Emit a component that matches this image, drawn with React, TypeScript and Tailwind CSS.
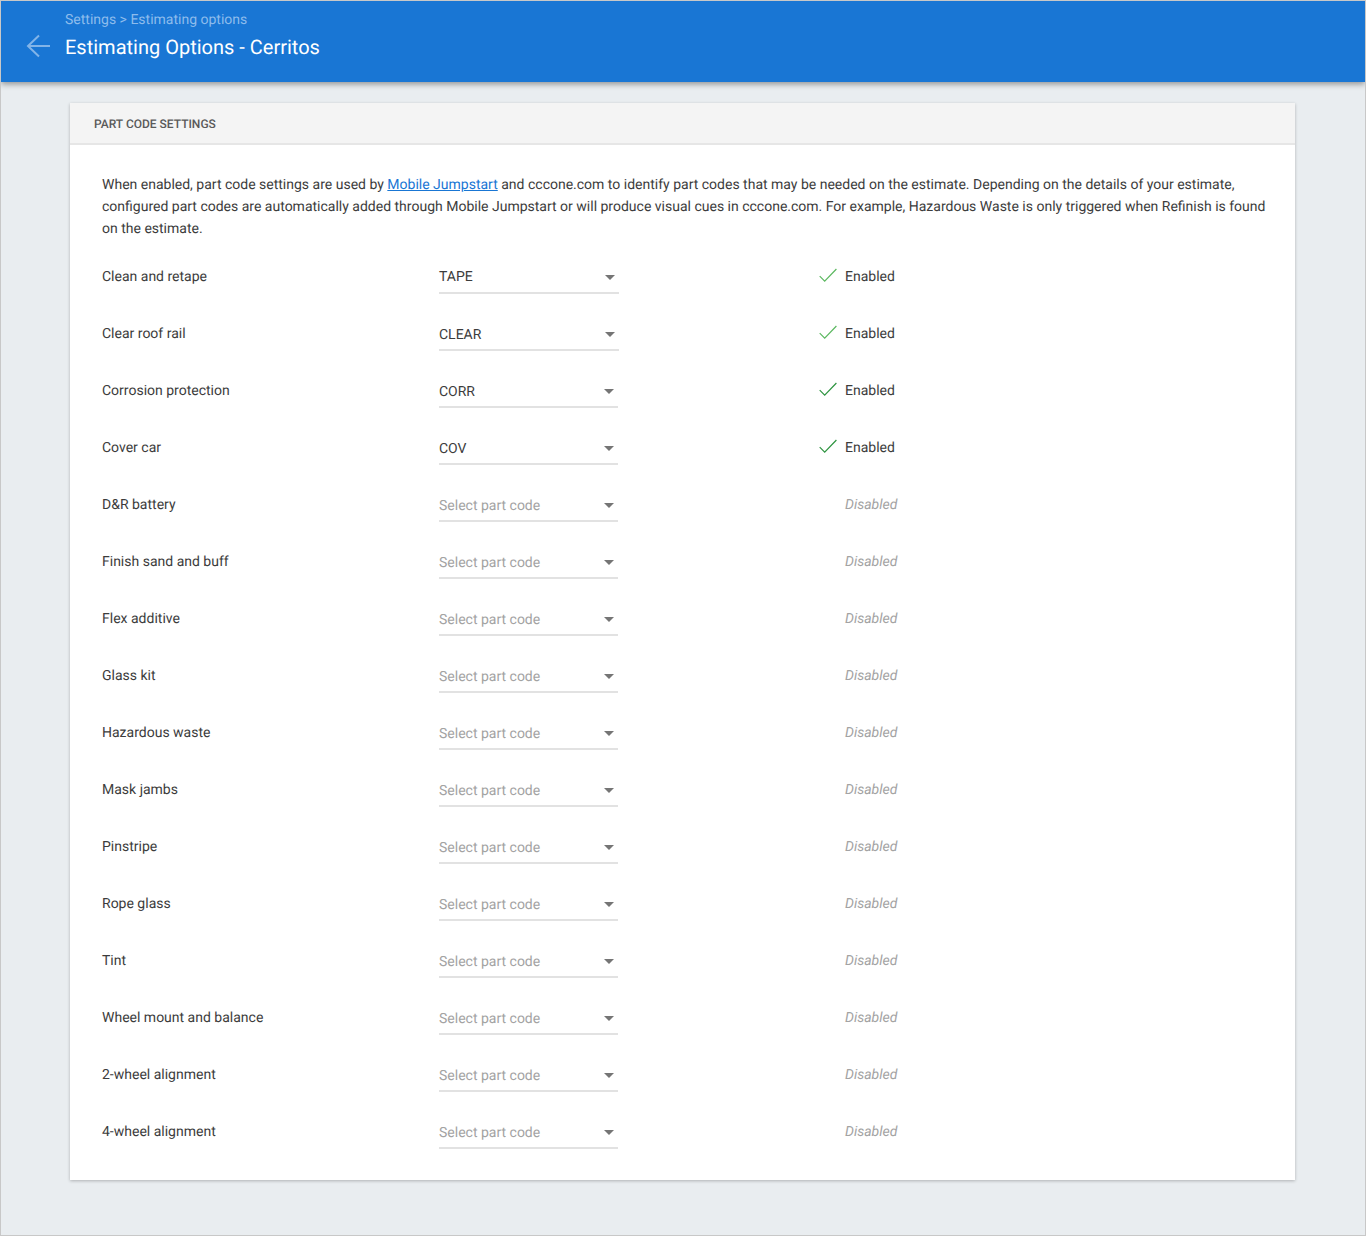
const rows: { label: string; code?: string; w: string; tone?: string; check?: string }[] = [
  { label: "Clean and retape", code: "TAPE", w: "w-[180px]", tone: "-mt-[2px]", check: "#5cb860" },
  { label: "Clear roof rail", code: "CLEAR", w: "w-[180px]", check: "#5cb860" },
  { label: "Corrosion protection", code: "CORR", w: "w-[179px]", check: "#2e9440" },
  { label: "Cover car", code: "COV", w: "w-[179px]", check: "#2e9440" },
  { label: "D&R battery", w: "w-[179px]" },
  { label: "Finish sand and buff", w: "w-[179px]" },
  { label: "Flex additive", w: "w-[179px]" },
  { label: "Glass kit", w: "w-[179px]" },
  { label: "Hazardous waste", w: "w-[179px]" },
  { label: "Mask jambs", w: "w-[179px]" },
  { label: "Pinstripe", w: "w-[179px]" },
  { label: "Rope glass", w: "w-[179px]" },
  { label: "Tint", w: "w-[179px]" },
  { label: "Wheel mount and balance", w: "w-[179px]" },
  { label: "2-wheel alignment", w: "w-[179px]" },
  { label: "4-wheel alignment", w: "w-[179px]" },
];

function Row({ r }: { r: (typeof rows)[number] }) {
  return (
    <div className="flex h-[57px] items-start">
      <div className="w-[337px] pt-[18px] text-[14px] leading-[22px] text-[#3c3c3c]">{r.label}</div>
      <div className="w-[380px]">
        <div className={`${r.w} mt-[17px] flex h-[29px] items-center justify-between border-b-2 border-[#e2e2e2] pb-[1px]`}>
          <span className={`text-[14px] leading-[22px] ${r.tone ?? ""} ${r.code ? "text-[#3c3c3c]" : "text-[#a3a3a3]"}`}>
            {r.code ?? "Select part code"}
          </span>
          <svg width="10" height="5" viewBox="0 0 10 5" className="mr-[4px] -mt-[2px]">
            <path d="M0 0h10L5 5z" fill="#757575" />
          </svg>
        </div>
      </div>
      <div className="mt-[18px] flex h-[22px] items-center">
        <div className="flex w-[26px] items-center">
          {r.check && (
            <svg width="18" height="15" viewBox="0 0 18 15" fill="none" className="-mt-[3px]">
              <path d="M0.7 8.2 L5.7 13.2 L17.4 1" stroke={r.check} strokeWidth="1.2" />
            </svg>
          )}
        </div>
        {r.check ? (
          <span className="text-[14px] leading-[22px] text-[#3c3c3c]">Enabled</span>
        ) : (
          <span className="text-[14px] leading-[22px] italic text-[#a3a3a3]">Disabled</span>
        )}
      </div>
    </div>
  );
}

export default function App() {
  return (
    <div className="flex h-[1236px] flex-col overflow-hidden border border-[#c8c8c8] bg-[#e9edf0] font-['Roboto',sans-serif] [text-rendering:geometricPrecision]">
      <header className="relative flex h-[81px] shrink-0 bg-[#1976d4] shadow-[0_2px_6px_rgba(0,0,0,0.4)]">
        <div className="flex w-[64px] items-start justify-end pr-[15px] pt-[33px]">
          <svg width="24" height="24" viewBox="0 0 24 24" fill="none" stroke="#82b4e8" strokeWidth="2">
            <path d="M24 12H2M13 1.5 2 12l11 10.5" />
          </svg>
        </div>
        <div className="pt-[10px]">
          <div className="text-[14px] leading-[18px] text-[#8dbcec]">Settings &gt; Estimating options</div>
          <div className="mt-[4px] text-[20px] leading-[28px] text-white">Estimating Options - Cerritos</div>
        </div>
      </header>
      <main className="mt-[21px] ml-[69px] w-[1225px] shrink-0 bg-white shadow-[0_1px_3px_rgba(0,0,0,0.25)]">
        <div className="flex h-[42px] items-center border-b-2 border-[#e6e6e6] bg-[#f4f4f4] pl-[24px] pt-[2px] text-[12px] font-medium text-[#5a5a5a]">
          PART CODE SETTINGS
        </div>
        <div className="pl-[32px] pr-[24px] pt-[29px] pb-[20px]">
          <p className="mb-[8px] text-[14px] leading-[22px] text-[#3c3c3c]">
            When enabled, part code settings are used by{" "}
            <a className="text-[#1976d4] underline">Mobile Jumpstart</a> and cccone.com to identify part codes that may be needed on the estimate. Depending on the details of your estimate, configured part codes are automatically added through Mobile Jumpstart or will produce visual cues in cccone.com. For example, Hazardous Waste is only triggered when Refinish is found on the estimate.
          </p>
          {rows.map((r) => (
            <Row key={r.label} r={r} />
          ))}
        </div>
      </main>
    </div>
  );
}
